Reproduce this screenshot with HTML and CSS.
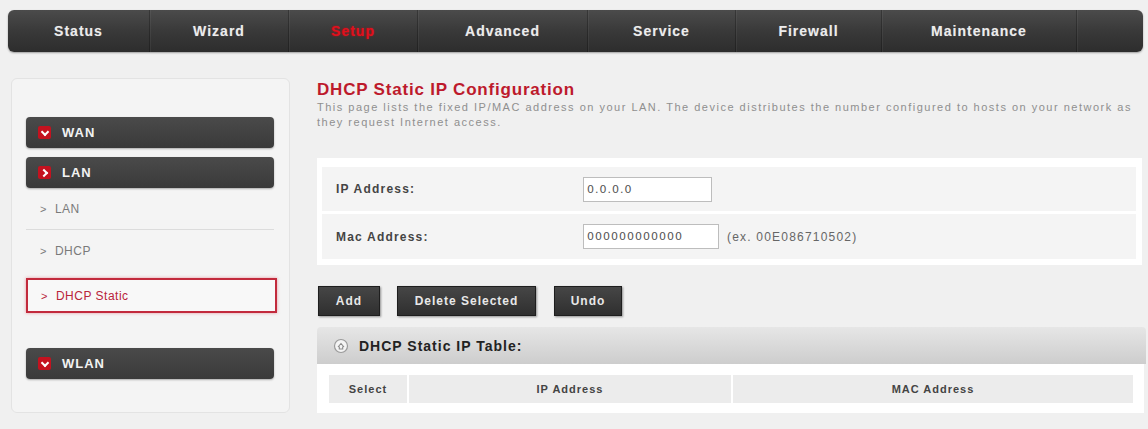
FILE: index.html
```html
<!DOCTYPE html>
<html>

<head>
    <meta http-equiv="Content-Type" content="text/html;charset=UTF-8" />
    <title>DHCP Static</title>
    <link rel="stylesheet" href="styles.css">
</head>

<body>
    <div class="top_nav">
        <a class="nav_item w1">Status</a>
        <a class="nav_item w2">Wizard</a>
        <a class="nav_item w3 active">Setup</a>
        <a class="nav_item w4">Advanced</a>
        <a class="nav_item w5">Service</a>
        <a class="nav_item w6">Firewall</a>
        <a class="nav_item w7">Maintenance</a>
        <span class="nav_rest"></span>
    </div>

    <div class="page">
        <div class="side">
            <div class="side_head"><i class="arrow down"></i>WAN</div>
            <div class="side_head"><i class="arrow right"></i>LAN</div>
            <ul class="side_list">
                <li class="line"><span class="gt">&gt;</span>LAN</li>
                <li><span class="gt">&gt;</span>DHCP</li>
                <li class="current"><span class="gt">&gt;</span>DHCP Static</li>
            </ul>
            <div class="side_head"><i class="arrow down"></i>WLAN</div>
        </div>

        <div class="main">
            <h1 class="title">DHCP Static IP Configuration</h1>
            <p class="desc">This page lists the fixed IP/MAC address on your LAN. The device distributes the number configured to hosts on your network as they request Internet access.</p>

            <div class="form_box">
                <div class="form_row">
                    <label>IP Address:</label>
                    <input class="ip_input" type="text" value="0.0.0.0">
                </div>
                <div class="form_row">
                    <label>Mac Address:</label>
                    <input class="mac_input" type="text" value="000000000000">
                    <span class="hint">(ex. 00E086710502)</span>
                </div>
            </div>

            <div class="btn_row">
                <button class="btn b_add">Add</button>
                <button class="btn b_del">Delete Selected</button>
                <button class="btn b_undo">Undo</button>
            </div>

            <div class="table_head">
                <svg class="tip_icon" width="16" height="16" viewBox="0 0 16 16">
                    <circle cx="8" cy="8" r="6.5" fill="#f4f4f4" stroke="#9a9a9a" stroke-width="1.2"/>
                    <path d="M5 9 L8 5.5 L11 9 M6.3 8.5 V11 H9.7 V8.5" fill="none" stroke="#8a8a8a" stroke-width="1.1"/>
                </svg>
                DHCP Static IP Table:
            </div>
            <div class="table_wrap">
                <table class="ip_table">
                    <tr>
                        <th class="c_sel">Select</th>
                        <th class="c_ip">IP Address</th>
                        <th class="c_mac">MAC Address</th>
                    </tr>
                </table>
            </div>
        </div>
    </div>
</body>

</html>
```

FILE: styles.css
```css
* {
    margin: 0;
    padding: 0;
    box-sizing: border-box;
}

html {
    font-family: "Liberation Sans", Arial, sans-serif;
    font-size: 12px;
    color: #333;
    background-color: #f0f0f0;
}

body {
    padding-top: 10px;
}

li {
    list-style: none;
}

/* top menu */
.top_nav {
    display: flex;
    height: 42px;
    margin-left: 8px;
    width: 1135px;
    border-radius: 6px;
    background: linear-gradient(#4b4b4b, #393939 50%, #2d2d2d);
    box-shadow: 0 1px 2px rgba(0, 0, 0, .35);
}

.nav_item {
    display: flex;
    align-items: center;
    justify-content: center;
    height: 100%;
    font-size: 14px;
    font-weight: bold;
    letter-spacing: 1px;
    color: #ececec;
    text-shadow: 0 0 1px rgba(255, 255, 255, .3);
    border-right: 1px solid rgba(0, 0, 0, .25);
    box-shadow: 1px 0 0 rgba(255, 255, 255, .05);
}

.nav_item.active {
    color: #e0101c;
    text-shadow: 0 0 2px rgba(230, 0, 20, .7);
}

.w1 { width: 142px; }
.w2 { width: 139px; }
.w3 { width: 129px; }
.w4 { width: 170px; }
.w5 { width: 148px; }
.w6 { width: 146px; }
.w7 { width: 195px; }

.nav_rest {
    flex: 1;
}

/* layout */
.page {
    display: flex;
    padding-top: 26px;
}

/* left menu */
.side {
    width: 279px;
    margin-left: 11px;
    padding: 38px 15px 32px 14px;
    background: #f4f4f4;
    border: 1px solid #e3e3e3;
    border-radius: 6px;
}

.side_head {
    display: flex;
    align-items: center;
    height: 31px;
    margin-bottom: 9px;
    padding-left: 12px;
    border-radius: 4px;
    background: linear-gradient(#4a4a4a, #3a3a3a);
    box-shadow: 0 1px 2px rgba(0, 0, 0, .3);
    color: #f2f2f2;
    font-size: 13px;
    font-weight: bold;
    letter-spacing: 1px;
}

.side_head:last-child {
    margin-bottom: 0;
}

.arrow {
    position: relative;
    width: 13px;
    height: 13px;
    margin-right: 11px;
    border-radius: 2px;
    background: #c4121f;
}

.arrow::after {
    content: "";
    position: absolute;
    left: 4px;
    top: 3px;
    width: 4px;
    height: 4px;
    border-right: 2px solid #fff;
    border-bottom: 2px solid #fff;
}

.arrow.down::after {
    transform: rotate(45deg);
}

.arrow.right::after {
    left: 3px;
    top: 4px;
    transform: rotate(-45deg);
}

.side_list {
    margin-top: -9px;
    margin-bottom: 35px;
}

.side_list li {
    display: flex;
    align-items: center;
    height: 42px;
    padding-left: 14px;
    font-size: 12px;
    letter-spacing: .5px;
    color: #7a7a7a;
}

.side_list .gt {
    margin-right: 8px;
    font-size: 11px;
}

.side_list li.line {
    height: 42px;
    border-bottom: 1px solid #dcdcdc;
}

.side_list li.current {
    height: 35px;
    margin-top: 6px;
    margin-right: -3px;
    padding-left: 13px;
    border: 2px solid #c22a3c;
    box-shadow: 0 0 3px rgba(220, 60, 80, .5);
    color: #b8243a;
    background: #f8f8f8;
}

/* right part */
.main {
    flex: 1;
    margin-left: 27px;
    margin-right: 2px;
    padding-top: 2px;
}

.title {
    font-size: 17px;
    line-height: 20px;
    letter-spacing: .8px;
    color: #bd1a2c;
}

.desc {
    font-size: 11px;
    line-height: 15px;
    letter-spacing: 1.5px;
    color: #8f8f8f;
}

.form_box {
    margin-top: 28px;
    margin-right: 4px;
    padding: 9px 6px 6px 5px;
    background: #fff;
}

.form_row {
    display: flex;
    align-items: center;
    height: 44px;
    padding-left: 14px;
    background: #f4f4f4;
}

.form_row + .form_row {
    margin-top: 3px;
    height: 45px;
}

.form_row label {
    width: 247px;
    font-weight: bold;
    letter-spacing: 1.2px;
    color: #444;
}

.form_row input {
    height: 25px;
    padding-left: 3px;
    border: 1px solid #bdbdbd;
    font-family: "DejaVu Sans", sans-serif;
    font-size: 11px;
    letter-spacing: 1px;
    color: #555;
    background: #fff;
}

.ip_input {
    width: 129px;
}

.mac_input {
    width: 136px;
    height: 26px;
}

.hint {
    margin-left: 8px;
    font-size: 12px;
    letter-spacing: 1.2px;
    color: #666;
}

.btn_row {
    display: flex;
    margin-top: 21px;
    padding-left: 1px;
}

.btn {
    height: 30px;
    margin-right: 17px;
    border: 1px solid #1e1e1e;
    background: linear-gradient(#464646, #2f2f2f);
    box-shadow: 1px 1px 2px rgba(0, 0, 0, .4);
    color: #e8e8e8;
    font-family: "Liberation Sans", Arial, sans-serif;
    font-size: 12px;
    font-weight: bold;
    letter-spacing: 1px;
}

.b_add { width: 62px; }
.b_del { width: 139px; margin-right: 18px; }
.b_undo { width: 68px; }

.table_head {
    display: flex;
    align-items: center;
    height: 37px;
    margin-top: 11px;
    padding-left: 16px;
    border-radius: 4px 4px 0 0;
    background: linear-gradient(#e6e6e6, #cdcdcd);
    font-size: 14px;
    font-weight: bold;
    letter-spacing: 1px;
    color: #222;
}

.tip_icon {
    margin-right: 10px;
}

.table_wrap {
    margin-right: 2px;
    padding: 11px 11px 10px 12px;
    background: #fff;
}

.ip_table {
    width: 100%;
    border-collapse: collapse;
}

.ip_table th {
    height: 28px;
    background: #ececec;
    font-size: 11px;
    letter-spacing: 1px;
    color: #444;
    border-left: 2px solid #fff;
}

.ip_table th:first-child {
    border-left: 0;
}

.c_sel { width: 79px; }
.c_ip { width: 324px; }
```
